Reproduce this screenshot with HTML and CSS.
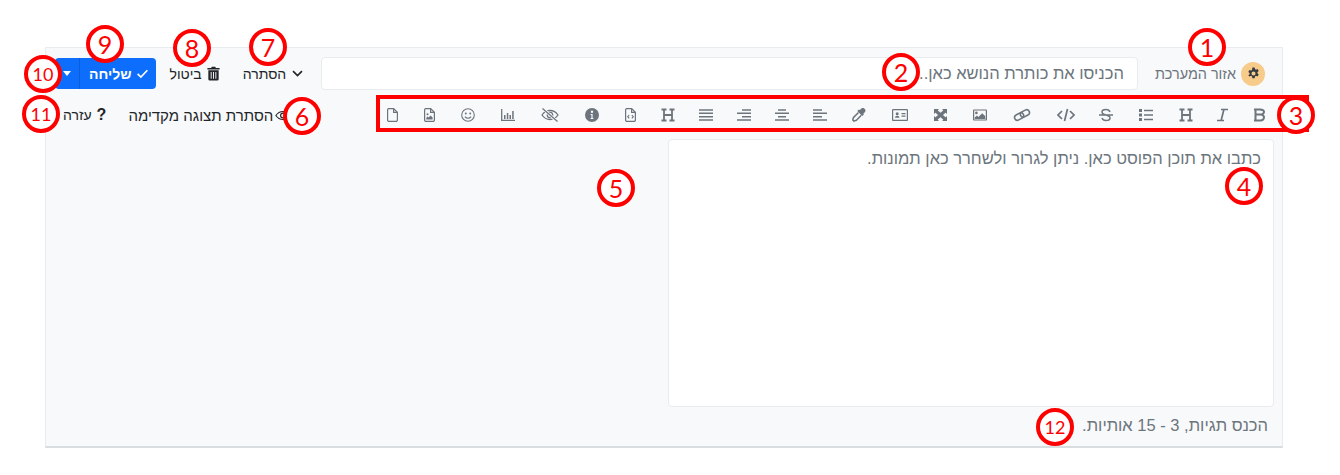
FILE: index.html
```html
<!DOCTYPE html>
<html lang="he" dir="rtl">
<head>
    <meta charset="UTF-8">
    <title>Composer</title>
    <link rel="stylesheet" href="styles.css">
</head>
<body>

    <!-- Composer -->
    <div class="composer">
        <div class="title-row">
            <span class="category">
                <span class="category-icon">
                    <svg viewBox="0 0 16 16" width="13" height="13"><path fill="#343a40" fill-rule="evenodd" d="M6.600 0h2.800l.4 2.100 1.200.7 2-.7 1.400 2.400-1.600 1.400v1.400l1.600 1.400-1.400 2.400-2-.7-1.200.7-.4 2.100H6.600l-.4-2.100-1.200-.7-2 .7L1.600 9.700l1.600-1.400V6.900L1.600 5.500 3 3.100l2 .7 1.200-.7zM8 5a2.500 2.500 0 1 0 0 5 2.500 2.500 0 0 0 0-5z" transform="translate(0 .5)"/></svg>
                </span>
                אזור המערכת
            </span>
            <input class="title-input" type="text" placeholder="הכניסו את כותרת הנושא כאן...">
            <div class="actions">
                <button class="link-btn hide-btn">
                    <svg class="btn-icon" viewBox="0 0 16 16"><path fill="none" stroke="#212529" stroke-width="2" d="M2.500 5l5.500 5.500L13.500 5"/></svg>
                    הסתרה
                </button>
                <button class="link-btn cancel-btn">
                    <svg class="btn-icon trash" viewBox="0 0 16 16"><path fill="#212529" fill-rule="evenodd" d="M1.500 2h4l.6-1.200h3.800L10.500 2h4v1.600h-13zM2.500 4.500h11V14a1.500 1.500 0 0 1-1.500 1.500H4A1.500 1.500 0 0 1 2.500 14zM5 6.500V13.500h1V6.500zM7.500 6.500V13.500h1V6.500zM10 6.500V13.500h1V6.500z"/></svg>
                    ביטול
                </button>
                <div class="send-group">
                    <button class="send-btn">
                        <svg class="btn-icon" viewBox="0 0 16 16"><path fill="none" stroke="#fff" stroke-width="2" d="M2 8.500l4 4L14 4"/></svg>
                        שליחה
                    </button>
                    <button class="send-caret"><span class="caret"></span></button>
                </div>
            </div>
        </div>

        <div class="toolbar-row">
            <div class="toolbar">
                <button class="tool"><svg width="11" height="14" viewBox="0 0 11 14"><path fill="none" stroke="#6c757d" stroke-width="2" d="M1.500 1.500h4.500a4 2.500 0 0 1 0 5H1.500zM1.500 6.500h5a3.500 3 0 0 1 0 6h-5zM0 1.500h3M0 12.500h3"/></svg></button>
                <button class="tool snug"><svg width="11" height="14" viewBox="0 0 11 14"><path fill="none" stroke="#6c757d" stroke-width="1.700" d="M7 1L4 13M4 1.500h7M0 12.500h7"/></svg></button>
                <button class="tool"><svg width="14" height="14" viewBox="0 0 14 14"><path fill="none" stroke="#6c757d" stroke-width="1.800" d="M3 1.500v11M11 1.500v11M3 7h8M0.500 1.500h5M8.500 1.500h5M0.500 12.500h5M8.500 12.500h5"/></svg></button>
                <button class="tool"><svg width="14" height="14" viewBox="0 0 14 14"><path fill="none" stroke="#6c757d" stroke-width="1.600" d="M5 2.500h9M5 7h9M5 11.500h9"/><path fill="#6c757d" d="M0 1h3v3H0zM0 5.500h3v3H0zM0 10h3v3H0z"/></svg></button>
                <button class="tool snug"><svg width="14" height="14" viewBox="0 0 14 14"><path fill="none" stroke="#6c757d" stroke-width="1.500" d="M0 7h14M11 4C10.500 2.500 9 1.500 7 1.500S3 2.500 3 4s1.500 2.500 4 3c2.500.5 4 1.500 4 3s-1.500 2.500-4 2.500-3.500-1-4-2.500"/></svg></button>
                <button class="tool"><svg width="18" height="14" viewBox="0 0 18 14"><path fill="none" stroke="#6c757d" stroke-width="1.700" d="M5 3L1 7l4 4M13 3l4 4-4 4M10.500 1L7.500 13"/></svg></button>
                <button class="tool"><svg width="18" height="14" viewBox="0 0 18 14"><g fill="none" stroke="#6c757d" stroke-width="1.600" transform="rotate(-28 9 7)"><rect x="1" y="4.200" width="9.500" height="5.600" rx="2.800"/><rect x="7.500" y="4.200" width="9.500" height="5.600" rx="2.800"/></g></svg></button>
                <button class="tool"><svg width="14" height="14" viewBox="0 0 14 14"><path fill="none" stroke="#6c757d" stroke-width="1.200" d="M1 2h12a.4.4 0 0 1 .4.4v9.200a.4.4 0 0 1-.4.400H1a.4.4 0 0 1-.4-.4V2.400A.4.4 0 0 1 1 2z"/><path fill="#6c757d" d="M3.400 3.600a1.300 1.300 0 1 1 0 2.600 1.300 1.300 0 0 1 0-2.600zM1.700 11V9.600l2.300-2 1.400 1.300L9.200 5.300l3.100 3V11z"/></svg></button>
                <button class="tool"><svg width="13" height="14" viewBox="0 0 13 14"><path fill="#6c757d" d="M0 1h5L0 6zM13 1v5L8 1zM0 13V8l5 5zM13 13H8l5-5z"/><path fill="none" stroke="#6c757d" stroke-width="3.200" d="M2 3l9 8M11 3l-9 8"/></svg></button>
                <button class="tool"><svg width="16" height="14" viewBox="0 0 16 14"><path fill="none" stroke="#6c757d" stroke-width="1.200" d="M1.200 1.600h13.600a.6.6 0 0 1 .6.6v9.600a.6.6 0 0 1-.6.6H1.200a.6.6 0 0 1-.6-.6V2.200a.6.6 0 0 1 .6-.6z"/><path fill="#6c757d" d="M3 9.800c0-1.300.9-2 2.200-2s2.300.7 2.300 2zM5.200 4.200a1.500 1.500 0 1 1 0 3 1.500 1.500 0 0 1 0-3zM9.500 5h4v1.200h-4zM9.500 7.500h4v1.200h-4z"/></svg></button>
                <button class="tool"><svg width="14" height="14" viewBox="0 0 14 14"><path fill="#6c757d" d="M9 .9a2.500 2.500 0 0 1 3.800 3.300l-1.500 1.500.6.700-1.600 1.600-5-5L6.900 1.400l.7.700z"/><path fill="none" stroke="#6c757d" stroke-width="1.500" d="M6.500 4.500L1.600 9.400c-.5.500-.3 1.200-.6 1.800l-.3.700 1.200 1.200.7-.3c.6-.3 1.300-.1 1.800-.6L9.300 7.300"/></svg></button>
                <button class="tool tight"><svg class="lines" viewBox="0 0 14 14"><path d="M0 2h9M0 5.300h14M0 8.700h9M0 12h14"/></svg></button>
                <button class="tool tight"><svg class="lines" viewBox="0 0 14 14"><path d="M3 2h8M0 5.300h14M3 8.700h8M0 12h14"/></svg></button>
                <button class="tool tight"><svg class="lines" viewBox="0 0 14 14"><path d="M5 2h9M0 5.300h14M5 8.700h9M0 12h14"/></svg></button>
                <button class="tool tight"><svg class="lines" viewBox="0 0 14 14"><path d="M0 2h14M0 5.300h14M0 8.700h14M0 12h14"/></svg></button>
                <button class="tool tight"><svg width="14" height="14" viewBox="0 0 14 14"><path fill="none" stroke="#6c757d" stroke-width="1.800" d="M3 1.500v11M11 1.500v11M3 7h8M0.500 1.500h5M8.500 1.500h5M0.500 12.500h5M8.500 12.500h5"/></svg></button>
                <button class="tool"><svg width="11" height="14" viewBox="0 0 11 14"><path fill="none" stroke="#6c757d" stroke-width="1.200" d="M1.500.6h5.200l3.700 3.700v7.700a1.400 1.400 0 0 1-1.400 1.400h-7.500A1.400 1.400 0 0 1 .6 12V2A1.400 1.400 0 0 1 1.500.6zM6.600.8v3.600h3.600"/><path fill="none" stroke="#6c757d" stroke-width="1.100" d="M4.200 7L2.700 8.700l1.500 1.700M6.800 7l1.500 1.700-1.500 1.700"/></svg></button>
                <button class="tool"><svg width="14" height="14" viewBox="0 0 14 14"><path fill="#6c757d" fill-rule="evenodd" d="M7 0a7 7 0 1 1 0 14A7 7 0 0 1 7 0zM7 2.600a1.200 1.200 0 1 0 0 2.400 1.200 1.200 0 0 0 0-2.400zM5.600 6v1.100h.8v2.900h-.8V11h2.800V10h-.8V6z"/></svg></button>
                <button class="tool"><svg width="18" height="14" viewBox="0 0 18 14"><path fill="none" stroke="#6c757d" stroke-width="1.300" d="M1 7c2-3 4.800-4.500 8-4.500S15 4 17 7c-2 3-4.800 4.500-8 4.500S3 10 1 7zM9 4.300a2.700 2.700 0 1 1 0 5.400 2.700 2.700 0 0 1 0-5.400z"/><path fill="none" stroke="#f8f9fa" stroke-width="3" d="M2.500 1l13 12"/><path fill="none" stroke="#6c757d" stroke-width="1.300" d="M1.500.5l15 13"/></svg></button>
                <button class="tool"><svg width="14" height="14" viewBox="0 0 14 14"><path fill="none" stroke="#6c757d" stroke-width="1.300" d="M.7 1v11.300H14"/><path fill="#6c757d" d="M3 7h1.500v4H3zM5.800 5h1.500v6H5.800zM8.500 7h1.500v4H8.500zM11.200 3h1.500v8h-1.500z"/></svg></button>
                <button class="tool"><svg width="14" height="14" viewBox="0 0 14 14"><circle cx="7" cy="7" r="6.300" fill="none" stroke="#6c757d" stroke-width="1.100"/><path fill="#6c757d" d="M3.800 5.400a1 1 0 1 1 2 0 1 1 0 0 1-2 0zM8.200 5.400a1 1 0 1 1 2 0 1 1 0 0 1-2 0z"/><path fill="none" stroke="#6c757d" stroke-width="1.100" d="M3.900 8.600c1.700 2.200 4.500 2.200 6.200 0"/></svg></button>
                <button class="tool"><svg width="11" height="14" viewBox="0 0 11 14"><path fill="none" stroke="#6c757d" stroke-width="1.200" d="M1.500.6h5.200l3.700 3.700v7.700a1.400 1.400 0 0 1-1.400 1.400h-7.500A1.400 1.400 0 0 1 .6 12V2A1.400 1.400 0 0 1 1.500.6zM6.600.8v3.600h3.600"/><path fill="#6c757d" d="M2.300 11.500V9.700l1.300-1.300 1 1 2-2 2 2v2.100zM3.500 5.300a1 1 0 1 1 0 2 1 1 0 0 1 0-2z"/></svg></button>
                <button class="tool"><svg width="11" height="14" viewBox="0 0 11 14"><path fill="none" stroke="#6c757d" stroke-width="1.200" d="M1.500.6h5.200l3.700 3.700v7.700a1.400 1.400 0 0 1-1.400 1.400h-7.500A1.400 1.400 0 0 1 .6 12V2A1.400 1.400 0 0 1 1.500.6zM6.600.8v3.600h3.600"/></svg></button>
            </div>
            <div class="view-links">
                <button class="link-btn preview-btn">
                    <svg class="btn-icon eye" viewBox="0 0 18 14"><path fill="none" stroke="#212529" stroke-width="1.300" d="M1 7c2-3 4.800-4.500 8-4.500S15 4 17 7c-2 3-4.800 4.500-8 4.500S3 10 1 7zM9 4.300a2.700 2.700 0 1 1 0 5.400 2.700 2.700 0 0 1 0-5.400z"/></svg>
                    הסתרת תצוגה מקדימה
                </button>
                <button class="link-btn help-btn"><span class="help-mark">?</span> עזרה</button>
            </div>
        </div>

        <div class="write-area">
            <textarea class="post-input" placeholder="כתבו את תוכן הפוסט כאן. ניתן לגרור ולשחרר כאן תמונות."></textarea>
        </div>

        <div class="hint">הכנס תגיות, 3 - 15 אותיות.</div>
    </div>

    <!-- Annotations -->
    <div class="toolbar-frame"></div>
    <span class="mark mark-1">1</span>
    <span class="mark mark-2">2</span>
    <span class="mark mark-3">3</span>
    <span class="mark mark-4">4</span>
    <span class="mark mark-5">5</span>
    <span class="mark mark-6">6</span>
    <span class="mark mark-7">7</span>
    <span class="mark mark-8">8</span>
    <span class="mark mark-9">9</span>
    <span class="mark small mark-10">10</span>
    <span class="mark small mark-11">11</span>
    <span class="mark small mark-12">12</span>

</body>
</html>
```

FILE: styles.css
```css
/* Basic Styles */
body {
    font-family: "Liberation Sans", sans-serif;
    font-size: 14px;
    margin: 0;
    padding: 0;
    background-color: #fff;
    color: #212529;
    height: 475px;
    overflow: hidden;
    position: relative;
}

button {
    font-family: inherit;
    font-size: 14px;
    border: none;
    background: none;
    padding: 0;
    cursor: pointer;
}

/* Composer */
.composer {
    width: 1238px;
    height: 401px;
    box-sizing: border-box;
    margin: 47px 57px 0 45px;
    background-color: #f8f9fa;
    border: 1px solid #e9ecef;
    border-bottom: 2px solid #dadde0;
    display: flex;
    flex-direction: column;
}

/* Title row */
.title-row {
    display: flex;
    align-items: center;
    height: 33px;
    margin-top: 9px;
    padding: 0 17px 0 9px;
}

.category {
    display: flex;
    align-items: center;
    gap: 5px;
    color: #6c757d;
    font-size: 14.400px;
    white-space: nowrap;
    margin-left: 17px;
}

.category-icon {
    width: 24px;
    height: 24px;
    border-radius: 50%;
    background-color: #f7cb8a;
    display: flex;
    align-items: center;
    justify-content: center;
}

.title-input {
    flex: 1;
    min-width: 0;
    height: 33px;
    box-sizing: border-box;
    border: 1px solid #e9ecef;
    border-radius: 4px;
    padding: 0 13px;
    font-family: inherit;
    font-size: 16.500px;
    background-color: #fff;
}

.title-input::placeholder,
.post-input::placeholder {
    color: #6c757d;
    opacity: 1;
}

.actions {
    display: flex;
    align-items: center;
    margin-right: 17px;
}

.link-btn {
    display: flex;
    align-items: center;
    gap: 4px;
    color: #212529;
    white-space: nowrap;
}

.btn-icon {
    width: 13px;
    height: 13px;
}

.hide-btn {
    gap: 5px;
}

.trash {
    width: 15px;
    height: 15px;
}

.eye {
    width: 16px;
}

.preview-btn {
    font-size: 15px;
    gap: 2px;
}

.help-btn {
    gap: 5px;
}

.cancel-btn {
    margin-right: 22px;
}

.send-group {
    display: flex;
    height: 31px;
    margin-right: 14px;
    border-radius: 4px;
    background-color: #0d6efd;
    color: #fff;
}

.send-btn {
    display: flex;
    align-items: center;
    gap: 4px;
    color: #fff;
    font-weight: 700;
    padding: 0 7px 0 9px;
    border-left: 1px solid #0b5ed7;
}

.send-caret {
    width: 24px;
    display: flex;
    align-items: center;
    justify-content: center;
}

.caret {
    border-top: 5px solid #fff;
    border-left: 4px solid transparent;
    border-right: 4px solid transparent;
}

/* Toolbar */
.toolbar-row {
    display: flex;
    align-items: center;
    justify-content: space-between;
    height: 36px;
    margin-top: 7px;
    padding: 0 17px 0 17px;
}

.toolbar {
    display: flex;
    align-items: center;
}

.tool {
    display: flex;
    align-items: center;
    justify-content: center;
    padding: 0 13px;
}

.tool:first-child {
    padding-right: 0;
}

.tool.snug {
    padding-left: 11px;
}

.tool.tight {
    padding: 0 12px;
}

.lines {
    width: 14px;
    height: 14px;
    fill: none;
    stroke: #6c757d;
    stroke-width: 1.500;
}

.view-links {
    display: flex;
    align-items: center;
    gap: 22px;
}

.help-mark {
    font-weight: 600;
    font-size: 16px;
}

/* Write area */
.write-area {
    height: 268px;
    margin-top: 6px;
    padding-right: 8px;
}

.post-input {
    display: block;
    width: 606px;
    height: 268px;
    box-sizing: border-box;
    border: 1px solid #e9ecef;
    border-radius: 4px;
    padding: 9px 12px;
    font-family: inherit;
    font-size: 16.500px;
    background-color: #fff;
    resize: none;
}

.hint {
    color: #6c757d;
    font-size: 16.500px;
    padding: 9px 14px 0 0;
}

/* Annotations */
.toolbar-frame {
    position: absolute;
    left: 376px;
    top: 95px;
    width: 925px;
    height: 29px;
    border: 4px solid #f00;
}

.mark {
    position: absolute;
    width: 30px;
    height: 30px;
    border: 4px solid #f00;
    border-radius: 50%;
    background-color: #fff;
    color: #f00;
    font-family: "Lato", sans-serif;
    font-size: 25px;
    line-height: 30px;
    text-align: center;
}

.mark.small {
    font-size: 18px;
}

.mark-1 { left: 1188px; top: 28px; }
.mark-2 { left: 882px; top: 53px; }
.mark-3 { left: 1277px; top: 96px; }
.mark-4 { left: 1225px; top: 167px; }
.mark-5 { left: 597px; top: 169px; }
.mark-6 { left: 283px; top: 97px; }
.mark-7 { left: 249px; top: 28px; }
.mark-8 { left: 173px; top: 29px; }
.mark-9 { left: 86px; top: 25px; }
.mark-10 { left: 24px; top: 55px; }
.mark-11 { left: 22px; top: 95px; }
.mark-12 { left: 1036px; top: 408px; }
```
